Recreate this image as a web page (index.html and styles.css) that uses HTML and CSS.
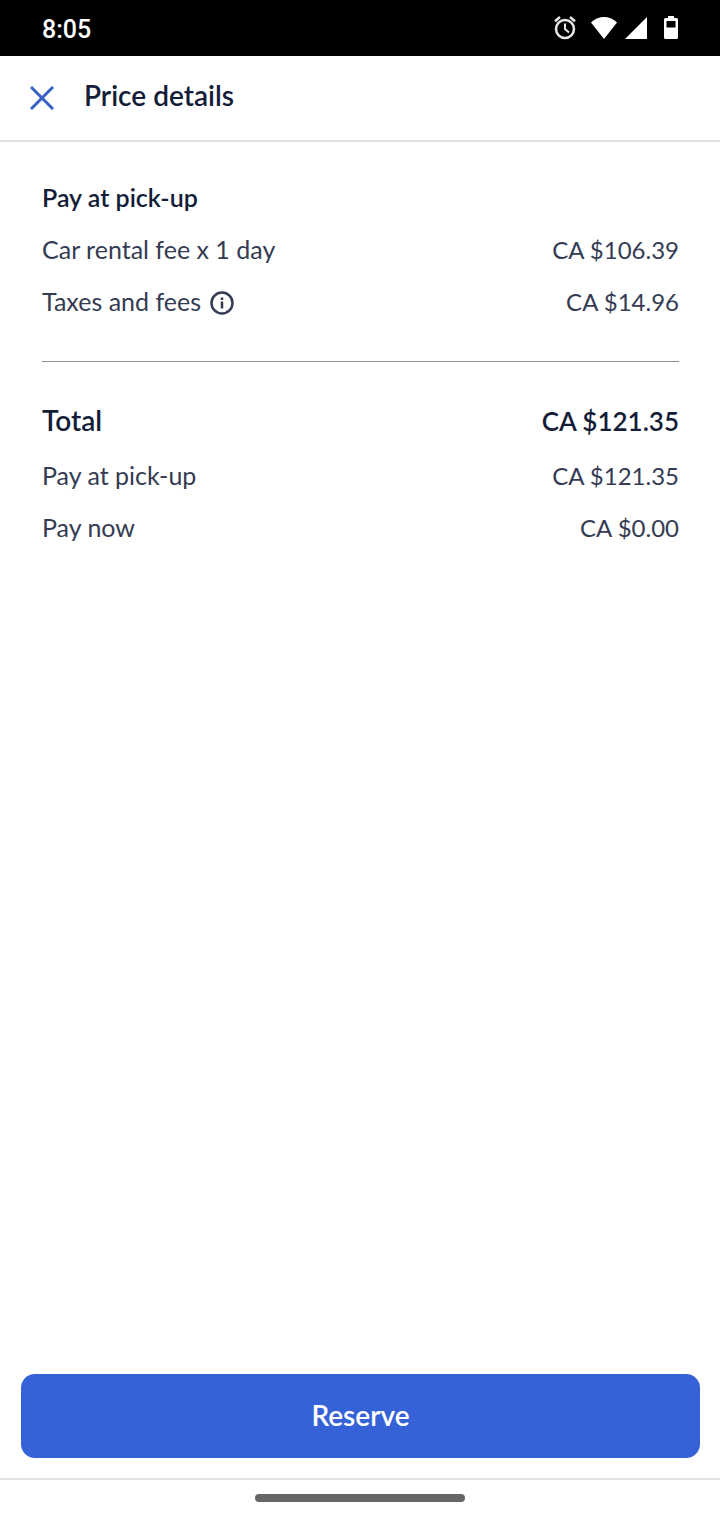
FILE: index.html
```html
<!DOCTYPE html>
<html lang="en">
<head>
    <meta charset="UTF-8">
    <meta name="viewport" content="width=device-width, initial-scale=1">
    <title>Price details</title>
    <link rel="stylesheet" href="styles.css">
</head>
<body>
    <div class="status-bar">
        <span class="time">8:05</span>
        <div class="status-icons">
            <svg class="alarm" width="24" height="26" viewBox="0 0 24 26" fill="none" stroke="#e8e8e8" stroke-width="2.500">
                <circle cx="12" cy="14" r="9"/>
                <path d="M12 8.500v5.500l4 3.500" stroke-width="2"/>
                <path d="M2 6.200l5-4.200M22 6.200L17 2"/>
            </svg>
            <svg class="wifi" width="26" height="22" viewBox="0 0 26 22" fill="#fff">
                <path d="M13 22L0 5.500C3.500 2 8 0 13 0s9.500 2 13 5.500z"/>
            </svg>
            <svg class="signal" width="22" height="22" viewBox="0 0 22 22" fill="#fff">
                <path d="M22 0v22H0z"/>
            </svg>
            <svg class="battery" width="14" height="24" viewBox="0 0 14 24" fill="#fff" fill-rule="evenodd">
                <path d="M4 0h6v2h2.500q1.500 0 1.500 1.500v18q0 1.500-1.500 1.500h-11Q0 23 0 21.500v-18Q0 2 1.500 2H4zM2.500 5v6.500h9V5z"/>
            </svg>
        </div>
    </div>

    <header class="header">
        <button type="button" class="close-button" aria-label="Close">
            <svg width="24" height="24" viewBox="0 0 24 24" fill="none" stroke="#3662c8" stroke-width="3">
                <path d="M1 1l22 22M23 1L1 23"/>
            </svg>
        </button>
        <h1>Price details</h1>
    </header>

    <main class="content">
        <section class="price-list">
            <h2>Pay at pick-up</h2>
            <div class="row">
                <span class="label">Car rental fee x 1 day</span>
                <span class="amount">CA $106.39</span>
            </div>
            <div class="row">
                <span class="label">
                    Taxes and fees
                    <button type="button" class="info-button" aria-label="About taxes and fees">
                        <svg width="24" height="24" viewBox="0 0 24 24" fill="none" stroke="#343b53" stroke-width="2.500">
                            <circle cx="12" cy="12" r="10.500"/>
                            <path d="M12 10.500v7M12 6.500V9"/>
                        </svg>
                    </button>
                </span>
                <span class="amount">CA $14.96</span>
            </div>
        </section>
        <hr class="divider">
        <section class="price-list">
            <div class="row total">
                <span class="label">Total</span>
                <span class="amount">CA $121.35</span>
            </div>
            <div class="row">
                <span class="label">Pay at pick-up</span>
                <span class="amount">CA $121.35</span>
            </div>
            <div class="row">
                <span class="label">Pay now</span>
                <span class="amount">CA $0.00</span>
            </div>
        </section>
    </main>

    <footer class="footer">
        <button type="button" class="reserve-button">Reserve</button>
    </footer>
    <div class="nav-bar">
        <div class="nav-handle"></div>
    </div>
</body>
</html>
```
FILE: styles.css
```css
* {
    box-sizing: border-box;
}

body {
    display: flex;
    flex-direction: column;
    min-height: 100vh;
    margin: 0;
    background-color: #fff;
    color: #343b53;
    font-family: Lato, "Open Sans", sans-serif;
    font-size: 25px;
}

h1,
h2 {
    margin: 0;
    color: #141d38;
    font-weight: 600;
}

button {
    padding: 0;
    border: none;
    background: none;
    font-family: inherit;
    cursor: pointer;
}

svg {
    display: block;
}

.status-bar {
    display: flex;
    align-items: center;
    justify-content: space-between;
    height: 56px;
    padding: 0 42px;
    background-color: #000;
    color: #fff;
}

.time {
    padding-top: 3px;
    font-family: Roboto, sans-serif;
    font-weight: 500;
}

.status-icons {
    display: flex;
    align-items: center;
}

.wifi {
    margin-left: 14px;
}

.signal {
    margin-left: 8px;
}

.battery {
    margin-left: 17px;
}

.header {
    display: flex;
    align-items: center;
    gap: 30px;
    height: 86px;
    padding: 0 30px;
    border-bottom: 2px solid #e2e2e5;
}

.header h1 {
    padding-bottom: 6px;
    font-size: 28px;
    line-height: 36px;
}

.content {
    flex: 1;
    padding: 29px 41px 29px 42px;
}

.price-list {
    line-height: 52px;
}

.price-list h2 {
    font-size: 25px;
}

.row {
    display: flex;
    align-items: baseline;
    justify-content: space-between;
    height: 52px;
}

.label {
    display: flex;
    align-items: center;
    gap: 9px;
}

.amount {
    font-size: 24px;
}

.info-button {
    margin-top: 4px;
}

.total {
    margin-bottom: 3px;
    color: #141d38;
    font-size: 28px;
    font-weight: 600;
}

.total .amount {
    font-size: 26px;
}

.divider {
    height: 1px;
    margin: 34px 0 32px;
    border: none;
    background-color: #8f9097;
}

.footer {
    padding: 20px 20px 20px 21px;
    border-bottom: 2px solid #e2e2e2;
}

.reserve-button {
    width: 100%;
    height: 84px;
    padding-bottom: 3px;
    border-radius: 14px;
    background-color: #3662d8;
    color: #fff;
    font-size: 28px;
    font-weight: 600;
}

.nav-bar {
    display: flex;
    justify-content: center;
    padding: 14px 0 18px;
}

.nav-handle {
    width: 210px;
    height: 8px;
    border-radius: 4px;
    background-color: #666;
}
```
